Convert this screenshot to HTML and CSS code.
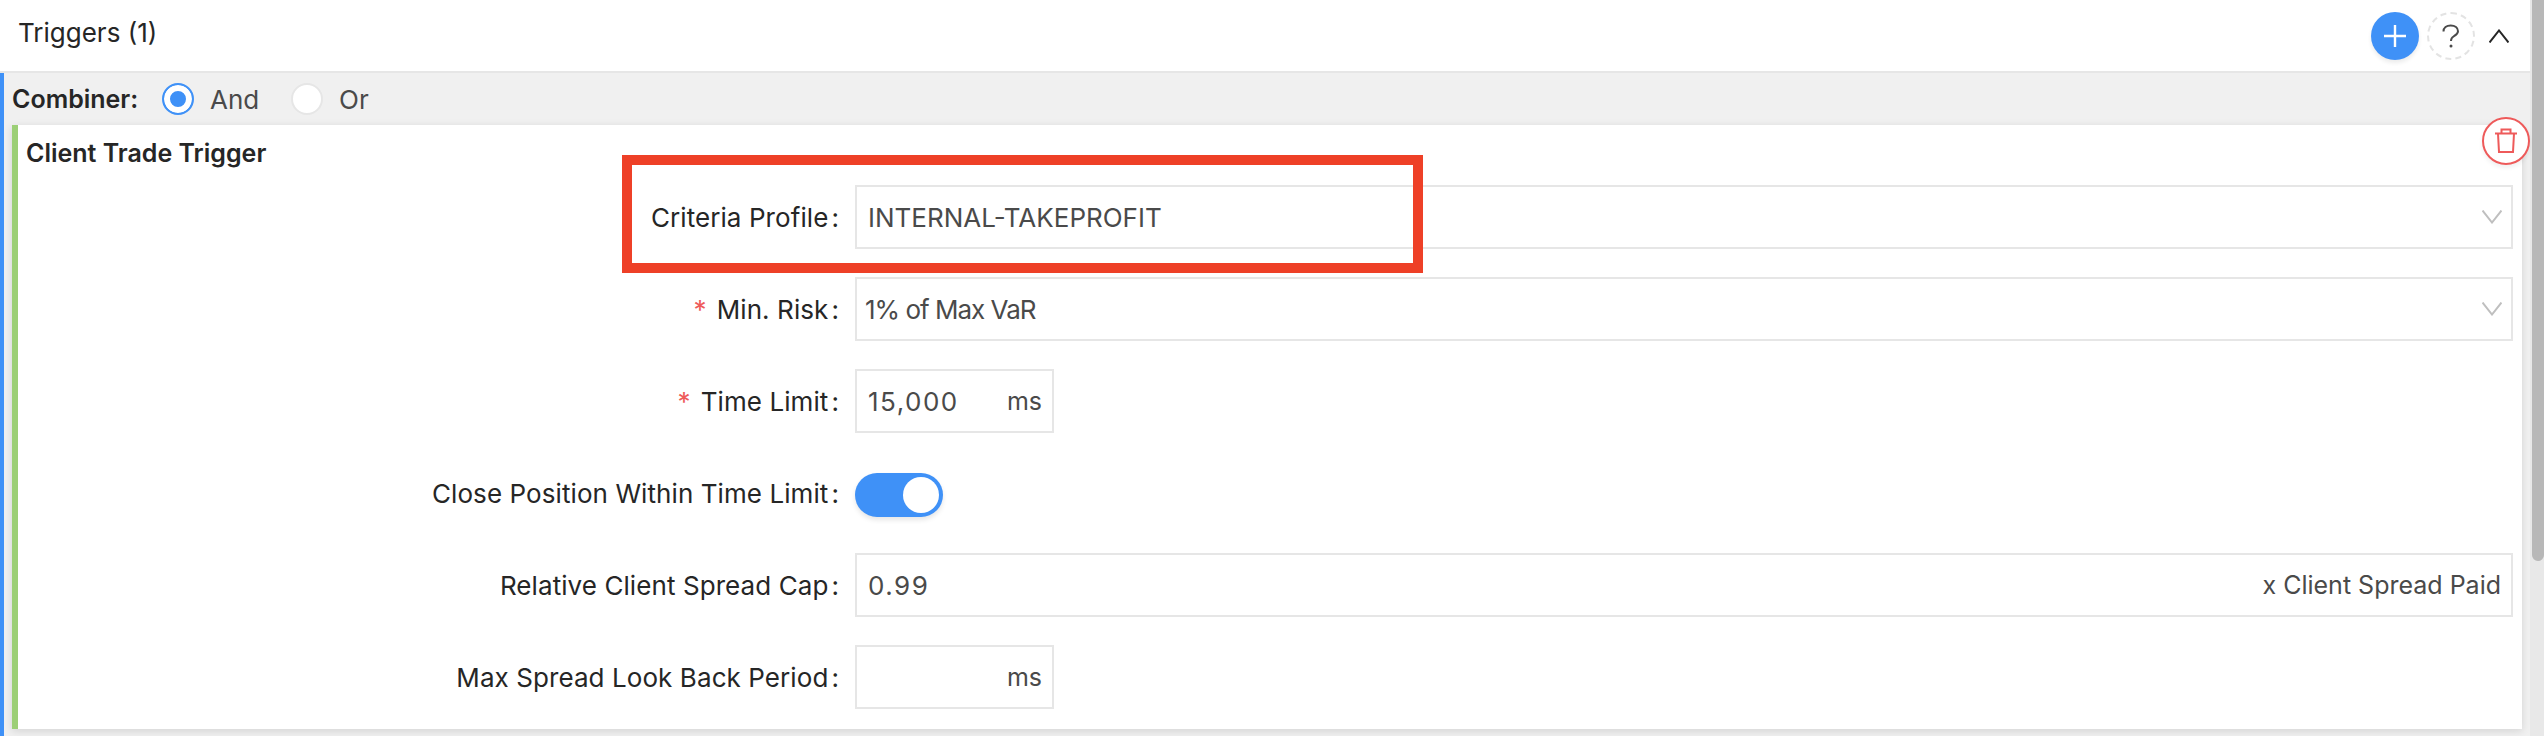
FILE: index.html
```html
<!DOCTYPE html>
<html lang="en">
<head>
    <meta charset="UTF-8">
    <meta name="viewport" content="width=device-width, initial-scale=1.0">
    <title>Triggers</title>
    <link rel="stylesheet" href="styles.css">
</head>
<body>

    <div class="app">
        <div class="main">
            <div class="section-header">
                <span class="section-title">Triggers (1)</span>
                <div class="header-actions">
                    <button class="add-btn">
                        <svg width="22" height="22" viewBox="0 0 22 22"><path d="M0 11H22M11 0V22" stroke="#fff" stroke-width="2.400" fill="none"/></svg>
                    </button>
                    <button class="help-btn">
                        <svg width="18" height="24" viewBox="0 0 18 24"><path d="M1.500 7.500C1.500 3.800 4.500 1.500 8.700 1.500C13 1.500 16 3.800 16 7.300C16 10.200 13.800 11.200 11.500 12.500C9.500 13.600 9 15 9 17" stroke="#4a4a4a" stroke-width="2" fill="none"/><circle cx="9" cy="22" r="1.500" fill="#4a4a4a"/></svg>
                    </button>
                    <button class="collapse-btn">
                        <svg width="20" height="14" viewBox="0 0 20 14"><path d="M0.500 13.500L10 1.500L19.500 13.500" stroke="#262626" stroke-width="2" fill="none"/></svg>
                    </button>
                </div>
            </div>

            <div class="panel">
                <div class="combiner">
                    <strong>Combiner:</strong>
                    <label class="radio"><span class="radio-dot checked"></span>And</label>
                    <label class="radio"><span class="radio-dot"></span>Or</label>
                </div>

                <div class="card">
                    <div class="card-title">Client Trade Trigger</div>

                    <button class="delete-btn">
                        <svg width="24" height="26" viewBox="0 0 24 26"><path d="M1 5.500H23M4 5.500L5 24H19L20 5.500M7.500 5.500V1.500H16.500V5.500" stroke="#ee5a5a" stroke-width="2" fill="none"/></svg>
                    </button>

                    <div class="form-row">
                        <div class="form-label">Criteria Profile<span class="colon">:</span></div>
                        <div class="field">
                            <span class="field-value">INTERNAL-TAKEPROFIT</span>
                            <svg class="select-arrow" width="20" height="14" viewBox="0 0 20 14"><path d="M0.500 0.500L10 12.500L19.500 0.500" stroke="#bfbfbf" stroke-width="2" fill="none"/></svg>
                        </div>
                    </div>

                    <div class="form-row">
                        <div class="form-label"><span class="required">*</span>Min. Risk<span class="colon">:</span></div>
                        <div class="field">
                            <span class="field-value field-tight">1% of Max VaR</span>
                            <svg class="select-arrow" width="20" height="14" viewBox="0 0 20 14"><path d="M0.500 0.500L10 12.500L19.500 0.500" stroke="#bfbfbf" stroke-width="2" fill="none"/></svg>
                        </div>
                    </div>

                    <div class="form-row">
                        <div class="form-label"><span class="required">*</span>Time Limit<span class="colon">:</span></div>
                        <div class="field field-short">
                            <span class="field-value field-number">15,000</span>
                            <span class="field-unit">ms</span>
                        </div>
                    </div>

                    <div class="form-row">
                        <div class="form-label">Close Position Within Time Limit<span class="colon">:</span></div>
                        <div class="toggle"><span class="toggle-knob"></span></div>
                    </div>

                    <div class="form-row">
                        <div class="form-label">Relative Client Spread Cap<span class="colon">:</span></div>
                        <div class="field">
                            <span class="field-value field-number">0.99</span>
                            <span class="field-unit">x Client Spread Paid</span>
                        </div>
                    </div>

                    <div class="form-row">
                        <div class="form-label">Max Spread Look Back Period<span class="colon">:</span></div>
                        <div class="field field-short">
                            <span class="field-value"></span>
                            <span class="field-unit">ms</span>
                        </div>
                    </div>

                    <div class="highlight-box"></div>
                </div>
            </div>
        </div>

        <div class="scrollbar"><div class="scrollbar-thumb"></div></div>
    </div>

</body>
</html>
```

FILE: styles.css
```css
html, body {
    margin: 0;
    height: 100%;
    overflow: hidden;
}

body {
    font-family: Inter, "Liberation Sans", sans-serif;
    font-size: 26px;
    color: #262626;
    background: white;
}

button {
    padding: 0;
    border: none;
    background: none;
    display: flex;
    align-items: center;
    justify-content: center;
    cursor: pointer;
}

.app {
    display: flex;
    height: 736px;
}

.main {
    flex-grow: 1;
    display: flex;
    flex-direction: column;
    min-width: 0;
}

.section-header {
    height: 71px;
    border-bottom: 2px solid #e6e6e6;
    padding: 0 15px 0 18px;
    display: flex;
    justify-content: space-between;
    align-items: center;
}

.section-title {
    position: relative;
    top: -3px;
}

.header-actions {
    display: flex;
    align-items: center;
    gap: 8px;
}

.add-btn {
    width: 48px;
    height: 48px;
    border-radius: 50%;
    background: #3f91f7;
    box-shadow: 0 3px 4px rgba(0, 0, 0, 0.08);
}

.help-btn {
    width: 48px;
    height: 48px;
    border-radius: 50%;
    border: 2px dashed #e3e3e3;
    box-sizing: border-box;
}

.collapse-btn {
    width: 32px;
    height: 48px;
}

.panel {
    flex-grow: 1;
    background: #f0f0f0;
    border-left: 4px solid #3f91f7;
}

.combiner {
    height: 52px;
    padding-left: 8px;
    display: flex;
    align-items: center;
}

.combiner strong {
    width: 150px;
    font-size: 25px;
    font-weight: 600;
}

.radio {
    display: flex;
    align-items: center;
    gap: 16px;
    width: 129px;
    color: #4a4a4a;
}

.radio-dot {
    width: 32px;
    height: 32px;
    box-sizing: border-box;
    border-radius: 50%;
    border: 2px solid #e6e6e6;
    background: white;
}

.radio-dot.checked {
    border-color: #3f91f7;
    box-shadow: inset 0 0 0 6px white;
    background: #3f91f7;
}

.card {
    position: relative;
    height: 604px;
    box-sizing: border-box;
    margin: 0 8px;
    padding-right: 9px;
    background: white;
    border-left: 6px solid #9ccf76;
    box-shadow: 0 2px 8px rgba(0, 0, 0, 0.12);
}

.card-title {
    height: 60px;
    padding-left: 8px;
    line-height: 56px;
    font-size: 25px;
    font-weight: 600;
}

.delete-btn {
    position: absolute;
    top: -8px;
    right: -8px;
    width: 48px;
    height: 48px;
    box-sizing: border-box;
    border-radius: 50%;
    border: 2px solid #ee5a5a;
    background: white;
    box-shadow: 0 3px 4px rgba(0, 0, 0, 0.06);
}

.form-row {
    display: flex;
    align-items: center;
    height: 64px;
    margin-bottom: 28px;
}

.form-label {
    width: 837px;
    flex-shrink: 0;
    padding-right: 16px;
    box-sizing: border-box;
    text-align: right;
    letter-spacing: 0.08px;
}

.colon {
    margin-left: 3px;
}

.required {
    color: #ee5a5a;
    margin-right: 10px;
}

.field {
    flex-grow: 1;
    height: 64px;
    box-sizing: border-box;
    border: 2px solid #e6e6e6;
    padding: 0 10px 0 11px;
    display: flex;
    justify-content: space-between;
    align-items: center;
    color: #4a4a4a;
}

.field-short {
    flex-grow: 0;
    width: 199px;
}

.field-number {
    letter-spacing: 1.5px;
}

.field-tight {
    letter-spacing: -1px;
    margin-left: -3px;
}

.field-unit {
    font-size: 25px;
}

.select-arrow {
    margin-right: -1px;
}

.toggle {
    width: 88px;
    height: 44px;
    border-radius: 22px;
    background: #3f91f7;
    box-shadow: 0 3px 5px rgba(0, 0, 0, 0.1);
    display: flex;
    align-items: center;
    justify-content: flex-end;
    padding-right: 4px;
    box-sizing: border-box;
    position: relative;
    top: 2px;
}

.toggle-knob {
    width: 36px;
    height: 36px;
    border-radius: 50%;
    background: white;
}

.highlight-box {
    position: absolute;
    left: 604px;
    top: 30px;
    width: 801px;
    height: 118px;
    box-sizing: border-box;
    border: 10px solid #ee4027;
    pointer-events: none;
}

.scrollbar {
    width: 14px;
    flex-shrink: 0;
    background: #e8e8e8;
    padding-left: 2px;
    box-sizing: border-box;
}

.scrollbar-thumb {
    height: 561px;
    background: #b8b8b8;
    border-radius: 0 0 6px 6px;
}
```
